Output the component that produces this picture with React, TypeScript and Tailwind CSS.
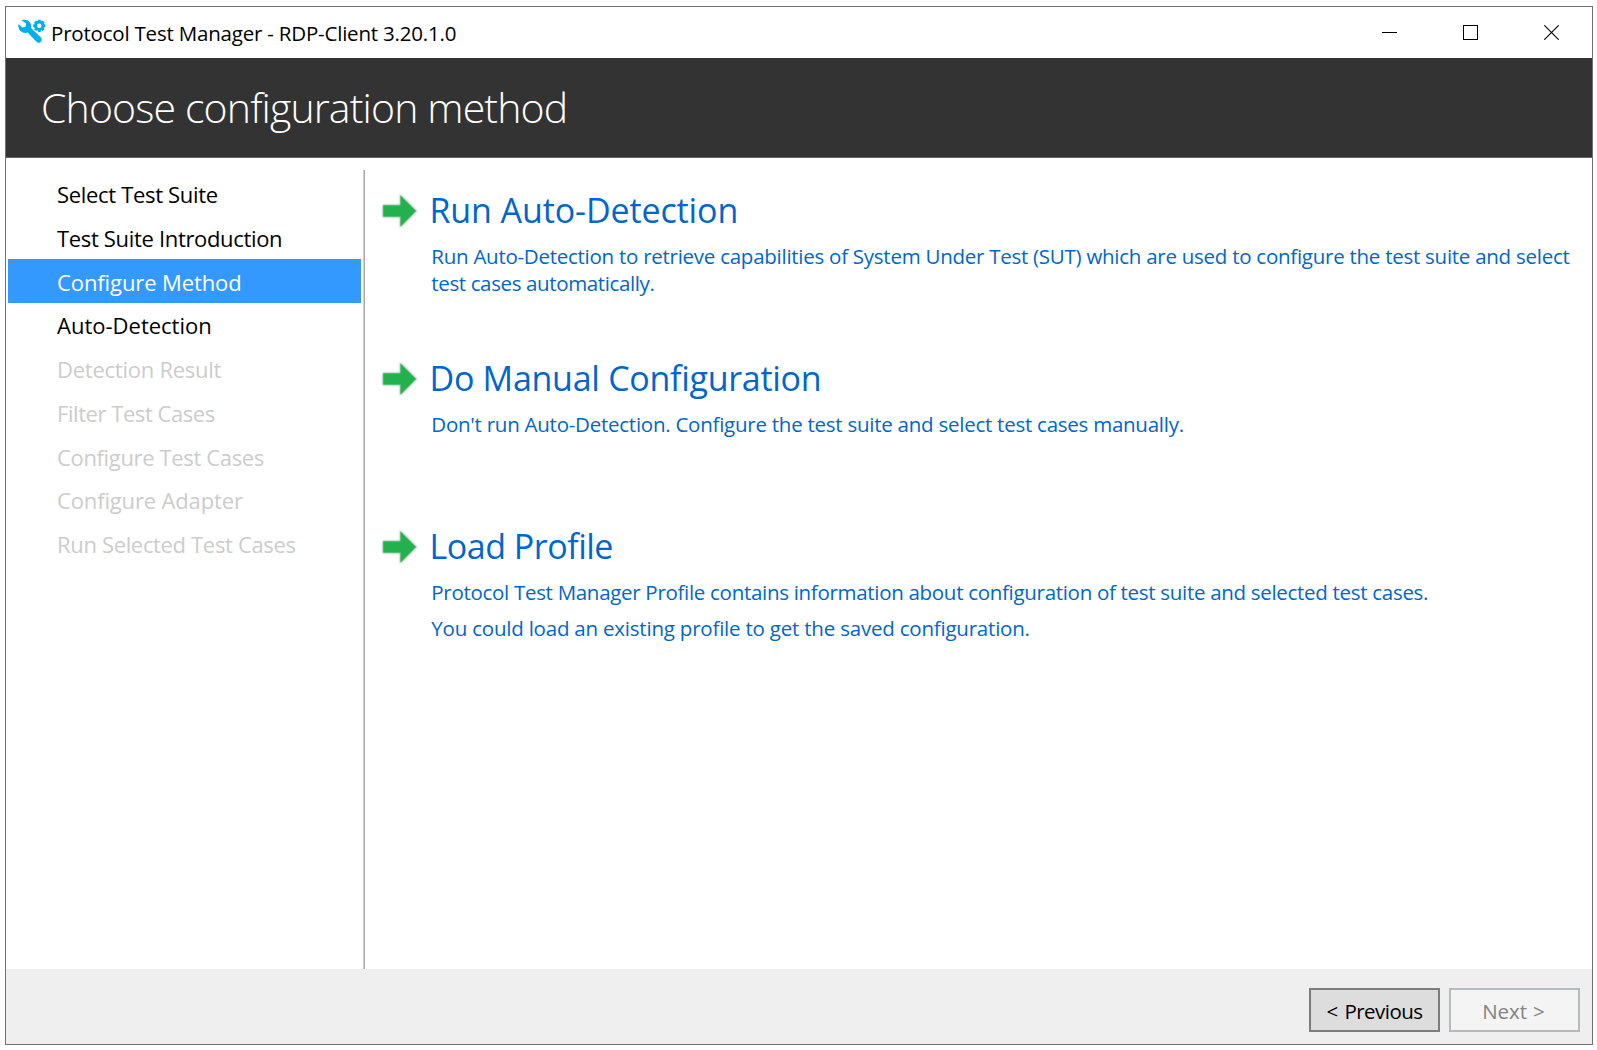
type Step = { label: string; tracking: string; state: "open" | "active" | "disabled" };

const steps: Step[] = [
  { label: "Select Test Suite", tracking: "tracking-[-0.32px]", state: "open" },
  { label: "Test Suite Introduction", tracking: "tracking-[-0.33px]", state: "open" },
  { label: "Configure Method", tracking: "tracking-[-0.1px]", state: "active" },
  { label: "Auto-Detection", tracking: "tracking-[0px]", state: "open" },
  { label: "Detection Result", tracking: "tracking-[-0.25px]", state: "disabled" },
  { label: "Filter Test Cases", tracking: "tracking-[-0.44px]", state: "disabled" },
  { label: "Configure Test Cases", tracking: "tracking-[-0.35px]", state: "disabled" },
  { label: "Configure Adapter", tracking: "tracking-[-0.15px]", state: "disabled" },
  { label: "Run Selected Test Cases", tracking: "tracking-[-0.34px]", state: "disabled" },
];

const stepColors = {
  open: "text-black",
  active: "bg-[#3399ff] text-white",
  disabled: "text-[#cccccc]",
};

type Line = { text: string; tracking: string };
type Method = { title: string; tracking: string; gap: string; lines: Line[] };

const methods: Method[] = [
  {
    title: "Run Auto-Detection",
    tracking: "tracking-[-0.11px]",
    gap: "gap-0",
    lines: [
      {
        text: "Run Auto-Detection to retrieve capabilities of System Under Test (SUT) which are used to configure the test suite and select",
        tracking: "tracking-[-0.26px]",
      },
      { text: "test cases automatically.", tracking: "tracking-[-0.37px]" },
    ],
  },
  {
    title: "Do Manual Configuration",
    tracking: "tracking-[-0.28px]",
    gap: "gap-0",
    lines: [
      {
        text: "Don't run Auto-Detection. Configure the test suite and select test cases manually.",
        tracking: "tracking-[-0.25px]",
      },
    ],
  },
  {
    title: "Load Profile",
    tracking: "tracking-[-0.48px]",
    gap: "gap-[9px]",
    lines: [
      {
        text: "Protocol Test Manager Profile contains information about configuration of test suite and selected test cases.",
        tracking: "tracking-[-0.3px]",
      },
      {
        text: "You could load an existing profile to get the saved configuration.",
        tracking: "tracking-[-0.21px]",
      },
    ],
  },
];

const teeth = [0, 45, 90, 135, 180, 225, 270, 315];

function AppIcon() {
  return (
    <svg width="28" height="26" viewBox="0 0 28 26" className="block shrink-0">
      <path
        d="M3.4 1.2 C6.8 0 10.6 1 12.3 4 C13.3 5.8 13.4 7.4 13 9.1 L22.9 18.4 C25.3 21 22.2 25.2 19 23.2 L9.6 13.6 C6.2 14.6 3 13.2 1.3 10.4 C0.4 8.7 0.1 7 0.5 5 L4.4 8.6 L7.6 7.8 L8.2 4.6 Z"
        fill="#00aeef"
      />
      <circle cx="21.3" cy="6.8" r="3.6" fill="none" stroke="#00aeef" strokeWidth="2.8" />
      {teeth.map((a) => (
        <rect
          key={a}
          x="19.8"
          y="0.7"
          width="3"
          height="2.4"
          rx="0.5"
          fill="#00aeef"
          transform={`rotate(${a} 21.3 6.8)`}
        />
      ))}
    </svg>
  );
}

function Arrow() {
  return (
    <svg width="38" height="38" viewBox="0 0 38 38" className="block shrink-0">
      <defs>
        <filter id="soft" x="-20%" y="-20%" width="140%" height="140%">
          <feGaussianBlur stdDeviation="0.8" />
        </filter>
      </defs>
      <path d="M2.9 13H20.1V2.2L36.9 19L20.1 35.8V25H2.9Z" fill="#5f7065" opacity="0.65" filter="url(#soft)" />
      <path d="M3.3 13.4H20.7V3.9L35.7 19L20.7 34.1V24.6H3.3Z" fill="#22b14c" stroke="#4cbf6e" strokeWidth="0.7" />
    </svg>
  );
}

export default function App() {
  return (
    <div className="h-[1050px] w-[1597px] bg-white pt-1.5 pl-[5px] font-['Open_Sans','Noto_Sans',sans-serif] whitespace-nowrap">
      <div className="flex h-[1039px] w-[1588px] flex-col border border-[#707070] bg-white">
        <div className="flex h-[51px] shrink-0 items-center">
          <div className="flex h-full items-start pt-3 pl-3">
            <AppIcon />
            <span className="-mt-[3px] ml-[5px] text-[20.5px] leading-[34px] text-black tracking-[-0.2px]">
              Protocol Test Manager - RDP-Client 3.20.1.0
            </span>
          </div>
          <div className="ml-auto flex h-full">
            <button className="flex w-[81px] items-center justify-center" aria-label="Minimize">
              <span className="h-px w-[15px] bg-black" />
            </button>
            <button className="flex w-[81px] items-center justify-center" aria-label="Maximize">
              <span className="size-[15px] border border-black" />
            </button>
            <button className="flex w-[81px] items-center justify-center" aria-label="Close">
              <svg width="15" height="15" viewBox="0 0 15 15" className="block">
                <path d="M0.3 0.3L14.7 14.7M14.7 0.3L0.3 14.7" stroke="#000" strokeWidth="1.1" />
              </svg>
            </button>
          </div>
        </div>

        <header className="h-[100px] shrink-0 border-b border-[#666666] bg-[#333333] pt-[21px] pl-[35px]">
          <h1 className="text-[41px] leading-[56px] font-light text-white tracking-[-0.86px]">
            Choose configuration method
          </h1>
        </header>

        <div className="flex min-h-0 flex-1 pt-3">
          <nav className="w-[357px] shrink-0 pt-[1.5px] pl-0.5">
            {steps.map((s) => (
              <div
                key={s.label}
                className={`h-[43.75px] w-[353px] pt-[0.6px] pl-[49px] text-[22px] leading-[44px] ${s.tracking} ${stepColors[s.state]}`}
              >
                {s.label}
              </div>
            ))}
          </nav>
          <div className="w-0.5 shrink-0 border-r border-[#a9a9ad] bg-[#cfcfd4]" />
          <main className="flex-1 pt-5 pl-[15px]">
            {methods.map((m) => (
              <section key={m.title} className="flex h-[168px] items-start">
                <div className="pt-0.5">
                  <Arrow />
                </div>
                <div className="pl-[12px]">
                  <h2 className={`-ml-[0.5px] text-[34px] leading-[40px] text-[#0066cc] ${m.tracking}`}>
                    {m.title}
                  </h2>
                  <div className={`mt-[12.5px] flex flex-col ${m.gap} pl-[1.3px]`}>
                    {m.lines.map((l) => (
                      <p
                        key={l.text}
                        className={`text-[20.5px] leading-[27px] text-[#0066cc] ${l.tracking}`}
                      >
                        {l.text}
                      </p>
                    ))}
                  </div>
                </div>
              </section>
            ))}
          </main>
        </div>

        <footer className="flex h-[75px] shrink-0 justify-end gap-[9px] bg-[#efefef] pt-[19px] pr-3">
          <button className="h-11 w-[131px] border-2 border-[#7c7c7c] bg-[#dddddd] pt-0.5 text-[20.5px] leading-[38px] text-black tracking-[-0.55px] [word-spacing:2px]">
            &lt; Previous
          </button>
          <button
            disabled
            className="h-11 w-[131px] border-2 border-[#b5babd] bg-[#f4f4f4] pt-0.5 pr-0.5 text-[20.5px] leading-[38px] text-[#838383] tracking-[-0.1px] [word-spacing:1px]"
          >
            Next &gt;
          </button>
        </footer>
      </div>
    </div>
  );
}
